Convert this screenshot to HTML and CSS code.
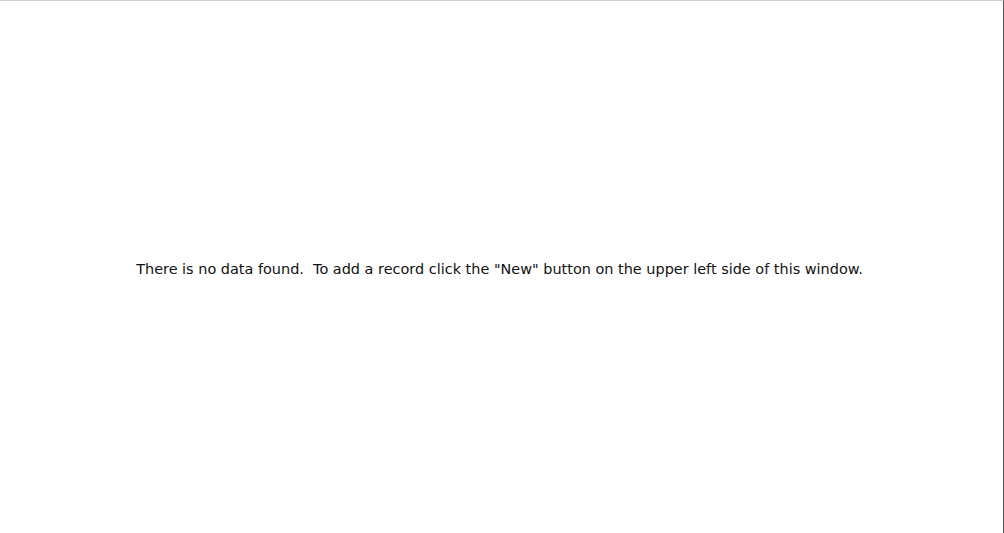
FILE: index.html
```html
<!DOCTYPE html>
<html>
<head>
<meta charset="utf-8">
<link rel="stylesheet" href="styles.css">
</head>
<body>
<div class="panel">
  <p class="empty">There is no data found.&nbsp; To add a record click the "New" button on the upper left side of this window.</p>
</div>
</body>
</html>
```
FILE: styles.css
```css
html, body {
  margin: 0;
  padding: 0;
  background: #ffffff;
}
.panel {
  box-sizing: border-box;
  width: 1004px;
  height: 533px;
  border-top: 1px solid #d0d0d0;
  border-right: 1px solid #555555;
  display: flex;
  align-items: center;
  justify-content: center;
  padding-top: 4px;
  padding-right: 4px;
}
.empty {
  margin: 0;
  font-family: "DejaVu Sans", Verdana, sans-serif;
  font-size: 14.45px;
  color: #111111;
  white-space: nowrap;
}
```
